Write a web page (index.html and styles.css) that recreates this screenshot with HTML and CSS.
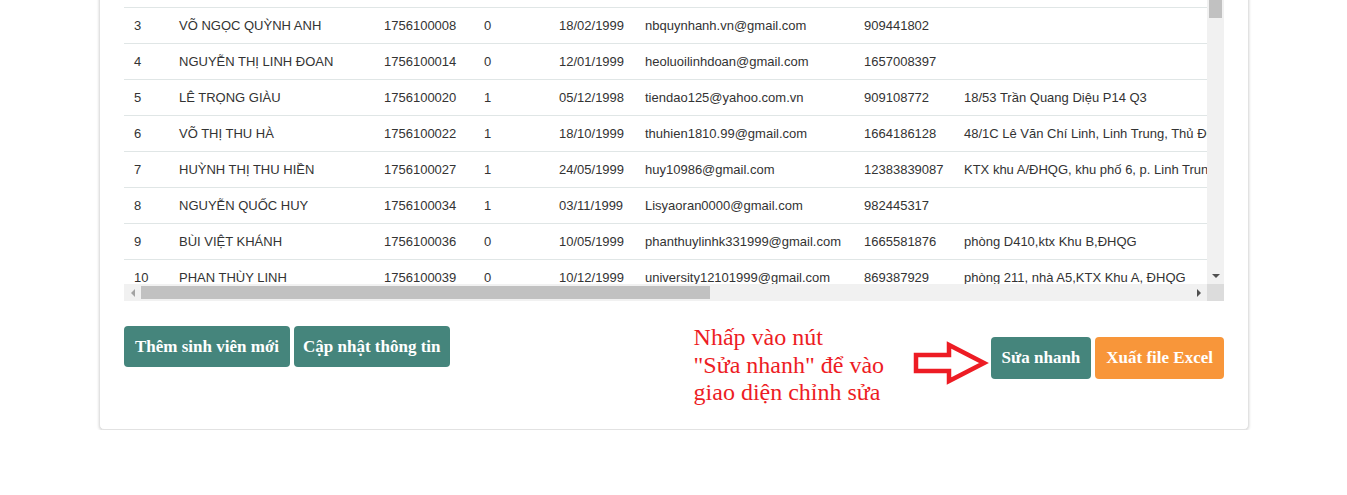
FILE: index.html
```html
<!DOCTYPE html>
<html lang="vi">
<head>
<meta charset="utf-8">
<title>Danh sách sinh viên</title>
<link rel="stylesheet" href="styles.css">
</head>
<body>
<div class="card">
  <div class="scroll-area">
    <div class="viewport">
      <table class="grid-table">
        <colgroup>
          <col class="c-stt"><col class="c-name"><col class="c-mssv"><col class="c-gt"><col class="c-date"><col class="c-mail"><col class="c-phone"><col class="c-addr">
        </colgroup>
        <tbody>
          <tr><td>3</td><td>VÕ NGỌC QUỲNH ANH</td><td>1756100008</td><td>0</td><td>18/02/1999</td><td>nbquynhanh.vn@gmail.com</td><td>909441802</td><td></td></tr>
          <tr><td>4</td><td>NGUYỄN THỊ LINH ĐOAN</td><td>1756100014</td><td>0</td><td>12/01/1999</td><td>heoluoilinhdoan@gmail.com</td><td>1657008397</td><td></td></tr>
          <tr><td>5</td><td>LÊ TRỌNG GIÀU</td><td>1756100020</td><td>1</td><td>05/12/1998</td><td>tiendao125@yahoo.com.vn</td><td>909108772</td><td>18/53 Trần Quang Diệu P14 Q3</td></tr>
          <tr><td>6</td><td>VÕ THỊ THU HÀ</td><td>1756100022</td><td>1</td><td>18/10/1999</td><td>thuhien1810.99@gmail.com</td><td>1664186128</td><td>48/1C Lê Văn Chí Linh, Linh Trung, Thủ Đức</td></tr>
          <tr><td>7</td><td>HUỲNH THỊ THU HIỀN</td><td>1756100027</td><td>1</td><td>24/05/1999</td><td>huy10986@gmail.com</td><td>12383839087</td><td>KTX khu A/ĐHQG, khu phố 6, p. Linh Trung, Thủ Đức</td></tr>
          <tr><td>8</td><td>NGUYỄN QUỐC HUY</td><td>1756100034</td><td>1</td><td>03/11/1999</td><td>Lisyaoran0000@gmail.com</td><td>982445317</td><td></td></tr>
          <tr><td>9</td><td>BÙI VIỆT KHÁNH</td><td>1756100036</td><td>0</td><td>10/05/1999</td><td>phanthuylinhk331999@gmail.com</td><td>1665581876</td><td>phòng D410,ktx Khu B,ĐHQG</td></tr>
          <tr><td>10</td><td>PHAN THÙY LINH</td><td>1756100039</td><td>0</td><td>10/12/1999</td><td>university12101999@gmail.com</td><td>869387929</td><td>phòng 211, nhà A5,KTX Khu A, ĐHQG</td></tr>
        </tbody>
      </table>
    </div>
    <div class="vbar">
      <div class="vthumb"></div>
      <div class="vtrack"></div>
      <div class="sb-btn"><span class="tri tri-down"></span></div>
    </div>
    <div class="hbar">
      <div class="sb-btn"><span class="tri tri-left"></span></div>
      <div class="htrack"><div class="hthumb"></div></div>
      <div class="sb-btn"><span class="tri tri-right"></span></div>
    </div>
    <div class="corner"></div>
  </div>

  <div class="footer">
    <div class="btn-group left">
      <button class="btn btn-teal">Thêm sinh viên mới</button>
      <button class="btn btn-teal btn-narrow">Cập nhật thông tin</button>
    </div>
    <div class="right">
      <div class="note">Nhấp vào nút<br>"Sửa nhanh" để vào<br>giao diện chỉnh sửa</div>
      <svg class="arrow" width="80" height="50" viewBox="0 0 80 50">
        <polygon points="5,17 38,17 38,7 73,25 38,43 38,33 5,33" fill="none" stroke="#ed1c24" stroke-width="4.5" stroke-linejoin="miter"/>
      </svg>
      <div class="btn-group">
        <button class="btn btn-teal btn-big">Sửa nhanh</button>
        <button class="btn btn-orange btn-big">Xuất file Excel</button>
      </div>
    </div>
  </div>
</div>
</body>
</html>
```

FILE: styles.css
```css
html, body {
  margin: 0;
  padding: 0;
  background: #ffffff;
}

.card {
  margin: -20px 0 0 99px;
  width: 1100px;
  padding: 19px 24px 0 24px;
  border: 1px solid #e2e2e2;
  border-radius: 5px;
  box-shadow: 0 1px 3px rgba(0, 0, 0, 0.18);
  background: #fff;
}

.scroll-area {
  display: grid;
  grid-template-columns: 1083px 17px;
  grid-template-rows: 284px 17px;
}

.viewport {
  overflow: hidden;
}

.grid-table {
  table-layout: fixed;
  border-collapse: collapse;
  width: 1250px;
  margin-top: 7px;
  font-family: "Liberation Sans", Arial, sans-serif;
  font-size: 13px;
  color: #333;
}

.c-stt { width: 45px; }
.c-name { width: 205px; }
.c-mssv { width: 100px; }
.c-gt { width: 75px; }
.c-date { width: 86px; }
.c-mail { width: 219px; }
.c-phone { width: 100px; }
.c-addr { width: 420px; }

.grid-table td {
  border-top: 1px solid #e0e6e6;
  height: 35px;
  padding: 1px 10px 0 10px;
  box-sizing: border-box;
  white-space: nowrap;
  overflow: hidden;
  vertical-align: middle;
  line-height: 18px;
}

.grid-table tr {
  height: 36px;
}

.vbar {
  background: #f1f1f1;
  display: flex;
  flex-direction: column;
}

.vthumb {
  height: 18px;
  margin: 0 2px;
  background: #c1c1c1;
}

.vtrack {
  flex: 1;
}

.hbar {
  background: #f1f1f1;
  display: flex;
}

.htrack {
  flex: 1;
  display: flex;
  align-items: center;
}

.hthumb {
  width: 569px;
  height: 13px;
  background: #c1c1c1;
}

.sb-btn {
  width: 17px;
  height: 17px;
  display: flex;
  align-items: center;
  justify-content: center;
}

.corner {
  background: #dcdcdc;
}

.tri {
  width: 0;
  height: 0;
  border-style: solid;
}

.tri-down {
  border-width: 4px 4px 0 4px;
  border-color: #505050 transparent transparent transparent;
}

.tri-left {
  border-width: 4px 4px 4px 0;
  border-color: transparent #a3a3a3 transparent transparent;
}

.tri-right {
  border-width: 4px 0 4px 4px;
  border-color: transparent transparent transparent #505050;
}

.footer {
  display: flex;
  justify-content: space-between;
  align-items: flex-start;
  height: 128px;
  box-sizing: border-box;
  padding-top: 20px;
}

.btn-group {
  display: flex;
  gap: 4px;
}

.btn-group.left {
  margin-top: 5px;
}

.btn {
  border: none;
  border-radius: 4px;
  color: #fff;
  font-family: "Liberation Serif", "Times New Roman", serif;
  font-weight: bold;
  font-size: 17px;
  height: 41px;
  padding: 0 11px;
  cursor: pointer;
}

.btn-narrow {
  padding: 0 9px;
}

.btn-big {
  height: 42px;
  padding: 0 11px;
}

.btn-teal {
  background: #45857c;
}

.btn-orange {
  background: #f8963a;
}

.right {
  display: flex;
  align-items: flex-start;
}

.right .btn-group {
  margin-top: 16px;
}

.note {
  width: 217px;
  margin-top: 3px;
  font-family: "Liberation Serif", "Times New Roman", serif;
  font-size: 24px;
  line-height: 27.5px;
  color: #ed1c24;
}

.arrow {
  display: block;
  margin-top: 17px;
}
```
